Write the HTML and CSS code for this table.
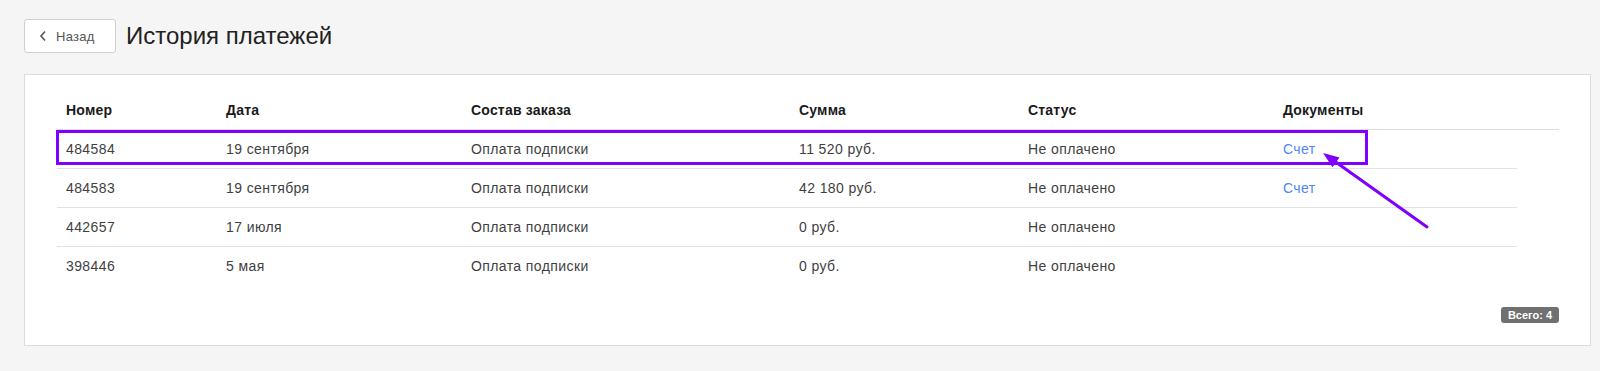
FILE: index.html
```html
<!DOCTYPE html>
<html lang="ru">
<head>
<meta charset="utf-8">
<title>История платежей</title>
<link rel="stylesheet" href="styles.css">
</head>
<body>
<div class="topbar">
  <button class="back-btn"><svg class="chev" width="8" height="12" viewBox="0 0 8 12"><polyline points="6,1.5 2,6 6,10.5" fill="none" stroke="#555" stroke-width="1.6"/></svg><span>Назад</span></button>
  <h1 class="title">История платежей</h1>
</div>
<div class="panel">
  <div class="thead">
    <div class="cell">Номер</div>
    <div class="cell">Дата</div>
    <div class="cell">Состав заказа</div>
    <div class="cell">Сумма</div>
    <div class="cell">Статус</div>
    <div class="cell">Документы</div>
  </div>
  <div class="row">
    <div class="cell">484584</div>
    <div class="cell">19 сентября</div>
    <div class="cell">Оплата подписки</div>
    <div class="cell">11 520 руб.</div>
    <div class="cell">Не оплачено</div>
    <div class="cell"><a class="link" href="#">Счет</a></div>
  </div>
  <div class="row">
    <div class="cell">484583</div>
    <div class="cell">19 сентября</div>
    <div class="cell">Оплата подписки</div>
    <div class="cell">42 180 руб.</div>
    <div class="cell">Не оплачено</div>
    <div class="cell"><a class="link" href="#">Счет</a></div>
  </div>
  <div class="row">
    <div class="cell">442657</div>
    <div class="cell">17 июля</div>
    <div class="cell">Оплата подписки</div>
    <div class="cell">0 руб.</div>
    <div class="cell">Не оплачено</div>
    <div class="cell"></div>
  </div>
  <div class="row last">
    <div class="cell">398446</div>
    <div class="cell">5 мая</div>
    <div class="cell">Оплата подписки</div>
    <div class="cell">0 руб.</div>
    <div class="cell">Не оплачено</div>
    <div class="cell"></div>
  </div>
  <div class="footer"><span class="badge">Всего: 4</span></div>
  <div class="highlight"></div>
  <svg class="arrow" width="1566" height="271" viewBox="0 0 1566 271">
    <line x1="1402" y1="152" x2="1310" y2="86.5" stroke="#7f00ff" stroke-width="3" stroke-linecap="round"/>
    <polygon points="1298,78 1314.5,82.4 1307.5,92.2" fill="#7f00ff"/>
  </svg>
</div>
</body>
</html>
```
FILE: styles.css
```css
html, body {
  margin: 0;
  padding: 0;
}
body {
  background: #f5f5f5;
  font-family: "Liberation Sans", Arial, sans-serif;
  color: #444;
  width: 1600px;
  height: 371px;
  overflow: hidden;
}
.topbar {
  display: flex;
  align-items: center;
  padding: 19px 24px 21px 24px;
  height: 34px;
}
.back-btn {
  display: flex;
  align-items: center;
  box-sizing: border-box;
  width: 92px;
  height: 34px;
  padding: 0 0 0 14px;
  background: #fff;
  border: 1px solid #cfcfcf;
  border-radius: 3px;
  font-family: "Liberation Sans", Arial, sans-serif;
  font-size: 13px;
  color: #555;
  letter-spacing: 0.3px;
}
.chev {
  margin-right: 9px;
  margin-top: -1px;
}
.title {
  margin: 0 0 0 10px;
  font-size: 24px;
  font-weight: normal;
  color: #222;
  line-height: 34px;
}
.panel {
  position: relative;
  margin: 0 9px 0 24px;
  background: #fff;
  border: 1px solid #dcdcdc;
  padding: 16px 31px 22px 32px;
}
.thead, .row {
  display: grid;
  grid-template-columns: 160px 245px 328px 229px 255px 1fr;
  height: 38px;
  align-items: center;
  font-size: 14px;
}
.thead {
  width: 1502px;
  font-weight: bold;
  color: #1a1a1a;
  border-bottom: 1px solid #dedede;
  letter-spacing: 0.2px;
}
.row {
  width: 1460px;
  border-bottom: 1px solid #e2e2e2;
  letter-spacing: 0.4px;
  color: #3f3f3f;
}
.row.last {
  border-bottom: none;
}
.cell {
  padding-left: 9px;
  white-space: nowrap;
}
.link {
  color: #4d86f7;
  text-decoration: none;
}
.footer {
  display: flex;
  justify-content: flex-end;
  width: 1502px;
  margin-top: 22px;
}
.badge {
  display: inline-block;
  box-sizing: border-box;
  height: 16px;
  width: 58px;
  line-height: 16px;
  text-align: center;
  background: #707070;
  color: #fff;
  font-weight: bold;
  font-size: 11px;
  border-radius: 3px;
}
.highlight {
  position: absolute;
  left: 31px;
  top: 55px;
  width: 1312px;
  height: 35px;
  box-sizing: border-box;
  border: 3px solid #7f00ff;
}
.arrow {
  position: absolute;
  left: 0;
  top: 0;
  overflow: visible;
  pointer-events: none;
}
```
